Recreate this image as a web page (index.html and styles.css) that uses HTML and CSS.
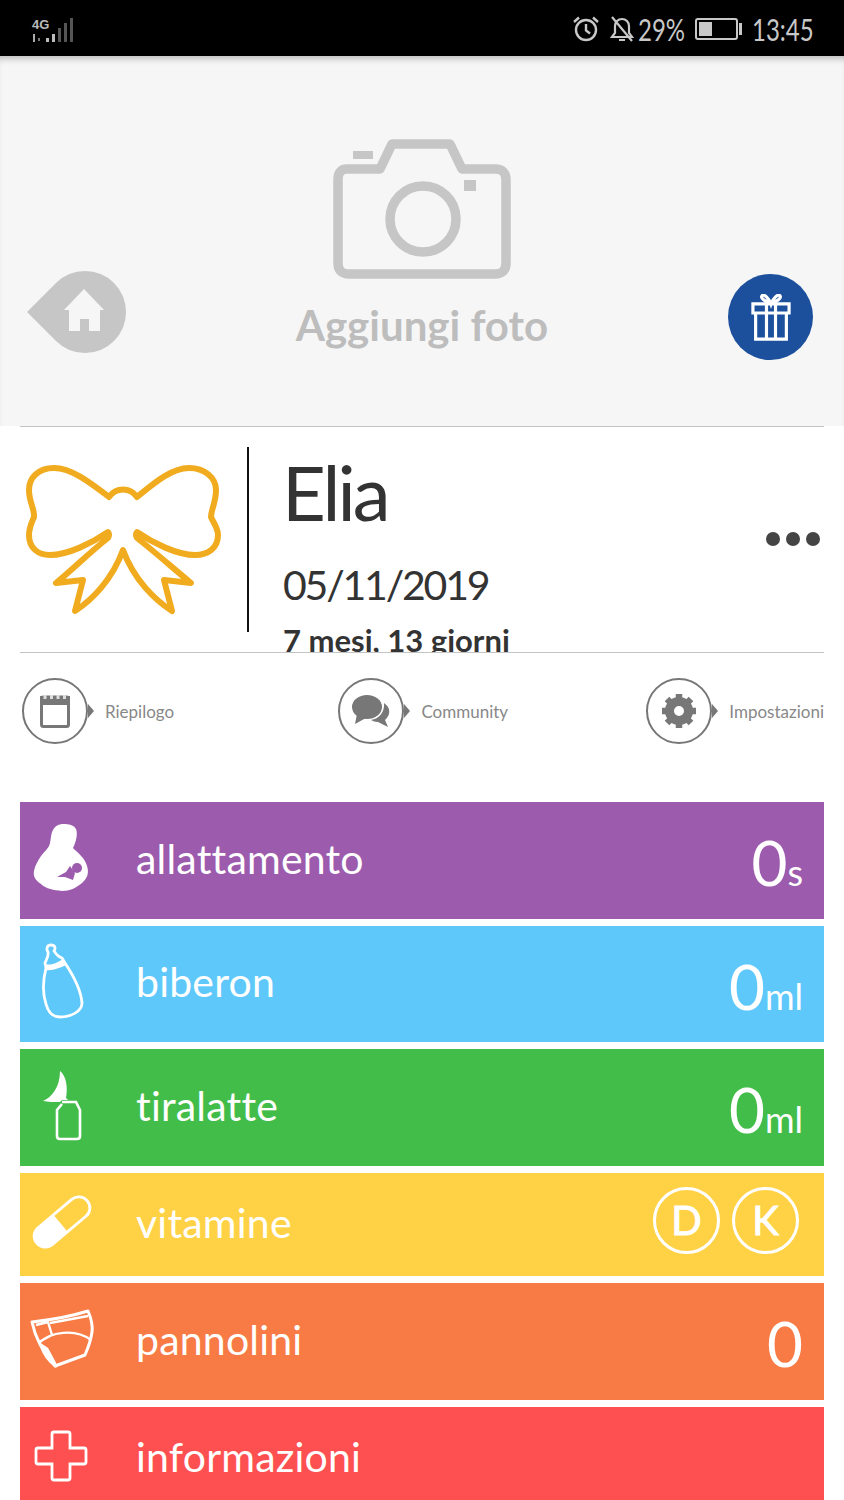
FILE: index.html
```html
<!DOCTYPE html>
<html lang="it">

<head>
  <meta charset="UTF-8">
  <title>Elia</title>
  <link rel="stylesheet" href="styles.css">
</head>

<body>
  <div class="statusbar">
    <div class="status-left">
      <svg width="46" height="30" viewBox="30 12 46 30">
        <rect x="33" y="32" width="2" height="8" fill="#aaa"/>
        <rect x="38" y="36" width="2" height="3" fill="#777"/>
        <rect x="46" y="36" width="3" height="4" fill="#bbb"/>
        <rect x="52" y="32" width="3" height="8" fill="#bbb"/>
        <rect x="58" y="26" width="3" height="14" fill="#555"/>
        <rect x="64" y="21" width="3" height="19" fill="#555"/>
        <rect x="70" y="16" width="3" height="24" fill="#555"/>
        <text x="32" y="27" class="net">4G</text>
      </svg>
    </div>
    <div class="status-right">
      <svg width="28" height="28" viewBox="0 0 28 28" fill="none" stroke="#c8c8c8" stroke-width="2.400">
        <circle cx="14" cy="15" r="10"/>
        <path d="M14 9v6.500l4 3M2 7l5-4.500M26 7l-5-4.500"/>
      </svg>
      <svg class="bell" width="26" height="28" viewBox="0 0 26 28" fill="none" stroke="#c8c8c8" stroke-width="2.200">
        <path d="M3 22h20l-3-4v-7c0-4-3-7-7-7s-7 3-7 7v7zM10 25h6M3 2l20 24"/>
      </svg>
      <span class="battery-text">29%</span>
      <div class="battery"><div class="battery-level"></div></div>
      <div class="battery-tip"></div>
      <span class="clock">13:45</span>
    </div>
  </div>

  <div class="hero">
    <svg class="home" width="100" height="84" viewBox="27 271 100 84">
      <path d="M27 313 L56 284 A41 41 0 1 1 56 342 Z" fill="#c6c6c6"/>
      <path d="M84 290 L104 311 H100 V332 H89 V320 H80 V332 H69 V311 H64 Z" fill="#f6f6f6"/>
    </svg>
    <div class="add-photo">
      <svg width="182" height="144" viewBox="331 138 182 144" fill="none" stroke="#c6c6c6" stroke-width="9.500" stroke-linejoin="round">
        <path d="M347 170 H380 L392 145 H450 L462 170 H495 Q506 170 506 181 V264 Q506 275 495 275 H349 Q338 275 338 264 V181 Q338 170 347 170 Z"/>
        <circle cx="423" cy="220" r="33"/>
        <path d="M353 152 H373 V160 H353 Z" fill="#c6c6c6" stroke="none"/>
        <path d="M464 181 H476 V192 H464 Z" fill="#c6c6c6" stroke="none"/>
      </svg>
      <div class="add-photo-text">Aggiungi foto</div>
    </div>
    <div class="gift">
      <svg width="40" height="47" viewBox="0 0 44 52" fill="none" stroke="#fff" stroke-width="3.500">
        <path d="M5 21V50H39V21M2 11H42V21H2ZM17 11V50M27 11V50"/>
        <path d="M22 11C16 8 10 5 12 2C14 -1 20 5 22 11C24 5 30 -1 32 2C34 5 28 8 22 11Z"/>
      </svg>
    </div>
  </div>

  <div class="profile">
    <svg class="bow" width="208" height="158" viewBox="20 460 208 158" fill="none" stroke="#f0ab1e" stroke-width="6" stroke-linejoin="round" stroke-linecap="round">
      <path d="M109 497 C92 484 72 468 54 468 C38 468 29 478 29 490 C29 502 35 510 34 517 C31 524 29 528 29 535 C29 548 38 555 50 555 C68 555 92 543 108 532 C110 534 109 536 108 538 C90 552 72 570 56 583 L83 580 L75 611 C92 600 112 580 123 550 C134 580 155 600 172 611 L164 580 L191 583 C175 570 155 552 137 538 C136 536 135 534 137 532 C153 543 177 555 195 555 C208 555 218 548 218 535 C218 528 214 524 211 517 C211 510 216 502 216 490 C216 478 205 468 189 468 C171 468 153 484 137 497 C130 487 116 487 109 497 Z"/>
    </svg>
    <div class="profile-info">
      <div class="baby-name">Elia</div>
      <div class="baby-date">05/11/2019</div>
      <div class="baby-age">7 mesi, 13 giorni</div>
    </div>
    <div class="dots"><span></span><span></span><span></span></div>
  </div>

  <div class="nav">
    <div class="nav-item">
      <div class="nav-circle">
        <svg width="30" height="34" viewBox="0 0 30 34">
          <rect x="1.500" y="3" width="27" height="29.500" rx="2" fill="none" stroke="#777" stroke-width="3"/>
          <rect x="0" y="2" width="30" height="9" fill="#777"/>
          <path d="M5 1V5M11.500 1V5M18 1V5M24.500 1V5" stroke="#ddd" stroke-width="3"/>
        </svg>
      </div>
      <span class="nav-label">Riepilogo</span>
    </div>
    <div class="nav-item nav-item-mid">
      <div class="nav-circle">
        <svg width="40" height="34" viewBox="0 0 40 34" fill="#777">
          <ellipse cx="16" cy="13" rx="15" ry="12"/>
          <path d="M6 20L4 30L15 24Z"/>
          <path d="M33 9C37 12 39 15 38 20C37 23 35 25 34 26L37 33L27 28C24 28 22 27 20 26C28 25 34 18 33 9Z"/>
        </svg>
      </div>
      <span class="nav-label">Community</span>
    </div>
    <div class="nav-item">
      <div class="nav-circle">
        <svg width="36" height="36" viewBox="0 0 36 36" fill="none" stroke="#777">
          <circle cx="18" cy="18" r="9.500" stroke-width="9"/>
          <path d="M18 1V7M18 29V35M1 18H7M29 18H35M6 6L10 10M30 30L26 26M30 6L26 10M6 30L10 26" stroke-width="6.500"/>
        </svg>
      </div>
      <span class="nav-label">Impostazioni</span>
    </div>
  </div>

  <div class="rows">
    <div class="row purple">
      <svg class="row-icon" width="116" height="117" viewBox="20 802 116 117">
        <path d="M63 824 C69 824 74 825 76 829 C78 834 76 842 73 848 C78 853 85 858 87 866 C89 872 88 878 82 883 C76 888 70 891 62 891 C54 890 46 889 41 884 C35 880 33 876 34 871 C35 865 38 861 41 856 C45 851 49 848 50 843 C51 838 51 833 53 830 C55 826 59 824 63 824 Z" fill="#fff"/>
        <circle cx="77" cy="868" r="5" fill="#9c5bad"/>
        <path d="M57 877 L66 872 L70 866 L75 873 L73 880 L65 877 Z" fill="#9c5bad"/>
      </svg>
      <span class="row-label">allattamento</span>
      <span class="row-value">0<small>s</small></span>
    </div>
    <div class="row blue">
      <svg class="row-icon" width="116" height="116" viewBox="20 926 116 116">
        <path d="M46 968 C43 980 42 992 46 1004 C48 1012 53 1017 60 1017 C70 1017 82 1012 82 1003 C81 990 73 975 65 963 L62 958 C59 957 56 954 54 951 C56 948 55 945 51 945 C47 945 46 949 48 952 C49 956 46 960 45 963 Z" fill="none" stroke="#fff" stroke-width="2.800" stroke-linejoin="round"/>
        <path d="M45 964 C52 966 58 962 63 959 L66 965 C60 968 52 971 46 970 Z" fill="#fff"/>
      </svg>
      <span class="row-label">biberon</span>
      <span class="row-value">0<small>ml</small></span>
    </div>
    <div class="row green">
      <svg class="row-icon" width="116" height="117" viewBox="20 1049 116 117">
        <path d="M60 1071 C66 1076 68 1086 66 1098 L68 1100 H62 L60 1102 C54 1102 48 1102 43 1101 C52 1097 60 1087 60 1071 Z" fill="#fff"/>
        <path d="M62 1102 H76 L80 1110 V1136 Q80 1139 77 1139 H60 Q57 1139 57 1136 V1110 L62 1104" fill="none" stroke="#fff" stroke-width="2.600"/>
      </svg>
      <span class="row-label">tiralatte</span>
      <span class="row-value">0<small>ml</small></span>
    </div>
    <div class="row yellow">
      <svg class="row-icon" width="116" height="104" viewBox="20 1172 116 104">
        <g transform="rotate(-40 62 1222)">
          <rect x="29" y="1211" width="66" height="22" rx="11" fill="none" stroke="#fff" stroke-width="2.800"/>
          <path d="M60 1211 H40 A11 11 0 0 0 40 1233 H60 Z" fill="#fff"/>
        </g>
      </svg>
      <span class="row-label">vitamine</span>
      <div class="vitamins">
        <span class="vitamin">D</span>
        <span class="vitamin">K</span>
      </div>
    </div>
    <div class="row orange">
      <svg class="row-icon" width="116" height="116" viewBox="20 1283 116 116" fill="none" stroke="#fff" stroke-width="3" stroke-linejoin="round">
        <path d="M32 1322 C50 1320 72 1316 88 1311 C91 1318 93 1325 92 1332 C91 1340 88 1348 85 1355 L55 1366 C48 1358 36 1342 32 1322 Z"/>
        <path d="M36 1325 L48 1322 L52 1335 L39 1342 M50 1323 L88 1316 M39 1343 C50 1332 75 1328 91 1340" stroke-width="2.400"/>
        <path d="M41 1345 C44 1355 50 1362 56 1366 L47 1349 Z" fill="#fff"/>
      </svg>
      <span class="row-label">pannolini</span>
      <span class="row-value">0</span>
    </div>
    <div class="row red">
      <svg class="row-icon" width="116" height="104" viewBox="20 1406 116 104">
        <path d="M54 1431 H68 Q70 1431 70 1433 V1447 H84 Q86 1447 86 1449 V1461 Q86 1463 84 1463 H70 V1477 Q70 1479 68 1479 H54 Q52 1479 52 1477 V1463 H38 Q36 1463 36 1461 V1449 Q36 1447 38 1447 H52 V1433 Q52 1431 54 1431 Z" fill="none" stroke="#fff" stroke-width="2.800"/>
      </svg>
      <span class="row-label">informazioni</span>
    </div>
  </div>
</body>

</html>
```

FILE: styles.css
```css
body {
  margin: 0;
  height: 1500px;
  overflow: hidden;
  background-color: #fff;
  font-family: Lato, sans-serif;
}

svg {
  display: block;
}

.statusbar {
  height: 56px;
  box-sizing: border-box;
  padding-top: 2px;
  background-color: #000;
  display: flex;
  justify-content: space-between;
  align-items: center;
  color: #c8c8c8;
}

.status-left {
  padding-left: 30px;
}

.net {
  font-family: "Liberation Sans", sans-serif;
  font-size: 13px;
  font-weight: bold;
  fill: #bbb;
}

.status-right {
  display: flex;
  align-items: center;
  padding-right: 34px;
}

.bell {
  margin-left: 9px;
}

/* no narrow font is installed, so these two are squeezed */
.battery-text,
.clock {
  font-size: 30px;
  transform: scaleX(0.8);
  transform-origin: left;
  white-space: nowrap;
}

.battery-text {
  width: 46px;
  margin-left: 3px;
}

.battery {
  width: 43px;
  height: 22px;
  border: 2px solid #c8c8c8;
  border-radius: 3px;
  margin-left: 11px;
  padding: 2px;
  box-sizing: border-box;
}

.battery-level {
  width: 13px;
  height: 100%;
  background-color: #c8c8c8;
}

.battery-tip {
  width: 3px;
  height: 12px;
  margin-left: 1px;
  background-color: #c8c8c8;
}

.clock {
  width: 58px;
  margin-left: 10px;
}

.hero {
  height: 370px;
  box-sizing: border-box;
  background-color: #f6f6f6;
  box-shadow: inset 0 7px 6px -4px #bdbdbd;
  display: grid;
  grid-template-columns: 1fr auto 1fr;
  align-items: end;
  padding-bottom: 66px;
}

.home {
  margin: 0 0 6px 27px;
}

.add-photo {
  display: flex;
  flex-direction: column;
  align-items: center;
  margin-bottom: 9px;
}

.add-photo-text {
  font-size: 42px;
  font-weight: bold;
  color: #bdbdbd;
  line-height: 52px;
  margin-top: 18px;
}

.gift {
  justify-self: end;
  width: 85px;
  height: 86px;
  margin-right: 31px;
  border-radius: 50%;
  background-color: #1c4f9c;
  display: flex;
  justify-content: center;
  align-items: center;
}

.profile {
  margin: 0 20px;
  height: 227px;
  box-sizing: border-box;
  border-top: 1px solid #c4c4c4;
  border-bottom: 1px solid #c4c4c4;
  display: flex;
  align-items: flex-start;
  position: relative;
  overflow: hidden;
}

.bow {
  margin-top: 33px;
}

.profile-info {
  margin: 20px 0 0 19px;
  border-left: 2px solid #111;
  height: 185px;
  padding-left: 34px;
  color: #333;
  white-space: nowrap;
}

.baby-name {
  font-size: 76px;
  line-height: 90px;
  letter-spacing: -3px;
  margin-left: -1px;
}

.baby-date {
  font-size: 41px;
  line-height: 50px;
  letter-spacing: -2.200px;
  margin-top: 23px;
}

.baby-age {
  font-size: 31px;
  line-height: 40px;
  font-weight: bold;
  margin-top: 10px;
}

.dots {
  display: flex;
  gap: 6px;
  position: absolute;
  right: 4px;
  top: 105px;
}

.dots span {
  width: 14px;
  height: 14px;
  border-radius: 50%;
  background-color: #444;
}

.nav {
  display: flex;
  justify-content: space-between;
  margin: 25px 20px 58px;
}

.nav-item {
  display: flex;
  align-items: center;
}

.nav-item-mid {
  margin-left: 26px;
}

.nav-circle {
  width: 66px;
  height: 66px;
  box-sizing: border-box;
  margin-left: 2px;
  border: 2px solid #777;
  border-radius: 50%;
  background-color: #fff;
  display: flex;
  justify-content: center;
  align-items: center;
  position: relative;
}

.nav-circle::after {
  content: "";
  position: absolute;
  right: -8px;
  top: 24px;
  border-left: 6px solid #777;
  border-top: 7px solid transparent;
  border-bottom: 7px solid transparent;
}

.nav-label {
  font-size: 17px;
  color: #888;
  margin-left: 17px;
}

.rows {
  margin: 0 20px;
  display: flex;
  flex-direction: column;
  gap: 7px;
}

.row {
  height: 116.500px;
  flex-shrink: 0;
  display: flex;
  align-items: center;
  color: #fff;
}

.row-icon {
  flex-shrink: 0;
}

.row-label {
  flex: 1;
  font-size: 41px;
  letter-spacing: 0.200px;
  padding-bottom: 4px;
}

.row-value {
  font-size: 62px;
  padding-top: 4px;
  padding-right: 21px;
}

.row-value small {
  font-size: 36px;
}

.purple { background-color: #9c5bad; }
.blue { background-color: #5ec8fb; }
.green { background-color: #43bd49; }
.yellow { background-color: #ffd246; height: 103.500px; }
.orange { background-color: #f87a44; }
.red { background-color: #fe5050; height: 104px; }

.vitamins {
  display: flex;
  gap: 12px;
  padding-right: 25px;
  padding-bottom: 8px;
}

.vitamin {
  width: 67px;
  height: 67px;
  box-sizing: border-box;
  border: 3px solid #fff;
  border-radius: 50%;
  display: flex;
  justify-content: center;
  align-items: center;
  font-size: 40px;
  -webkit-text-stroke: 1px #fff;
}
```
